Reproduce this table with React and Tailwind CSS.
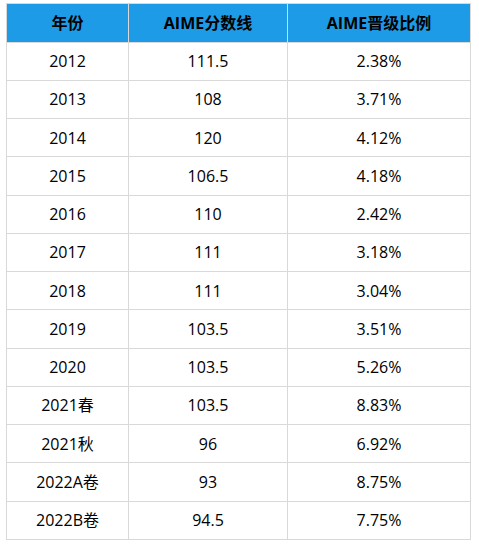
const rows = [
  ["2012", "111.5", "2.38%"],
  ["2013", "108", "3.71%"],
  ["2014", "120", "4.12%"],
  ["2015", "106.5", "4.18%"],
  ["2016", "110", "2.42%"],
  ["2017", "111", "3.18%"],
  ["2018", "111", "3.04%"],
  ["2019", "103.5", "3.51%"],
  ["2020", "103.5", "5.26%"],
  ["2021春", "103.5", "8.83%"],
  ["2021秋", "96", "6.92%"],
  ["2022A卷", "93", "8.75%"],
  ["2022B卷", "94.5", "7.75%"],
];

export default function App() {
  return (
    <div
      className="w-[479px] h-[549px] bg-white pt-[3px] pl-[6px]"
      style={{ fontFamily: '"Open Sans", "Noto Sans CJK SC", sans-serif' }}
    >
      <table className="border-collapse w-[464px] table-fixed text-[16px] text-black">
        <colgroup>
          <col className="w-[122px]" />
          <col className="w-[159px]" />
          <col className="w-[183px]" />
        </colgroup>
        <thead>
          <tr className="h-[38.5px] bg-[#1e9be6]">
            <th className="border border-[#d9d9d9] font-bold text-center p-0">年份</th>
            <th className="border border-[#d9d9d9] font-bold text-center p-0">AIME分数线</th>
            <th className="border border-[#d9d9d9] font-bold text-center p-0">AIME晋级比例</th>
          </tr>
        </thead>
        <tbody>
          {rows.map((r) => (
            <tr key={r[0]} className="h-[38.25px]">
              {r.map((c, i) => (
                <td key={i} className="border border-[#d9d9d9] text-center p-0">
                  {c}
                </td>
              ))}
            </tr>
          ))}
        </tbody>
      </table>
    </div>
  );
}
